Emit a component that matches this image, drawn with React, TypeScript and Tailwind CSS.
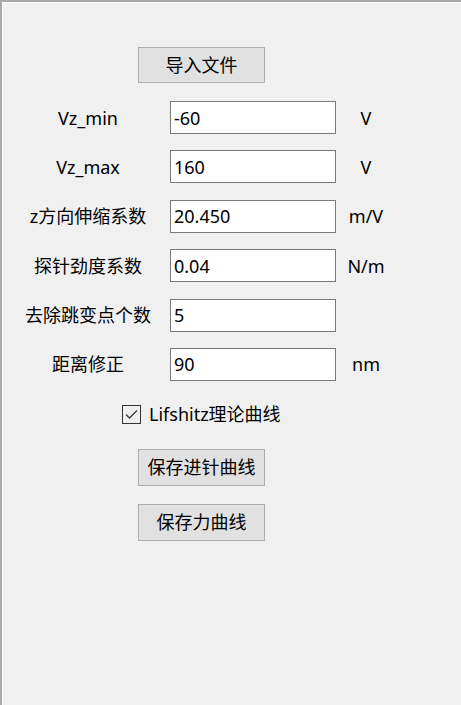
import React from "react";

const rows: { label: string; value: string; unit: string }[] = [
  { label: "Vz_min", value: "-60", unit: "V" },
  { label: "Vz_max", value: "160", unit: "V" },
  { label: "z方向伸缩系数", value: "20.450", unit: "m/V" },
  { label: "探针劲度系数", value: "0.04", unit: "N/m" },
  { label: "去除跳变点个数", value: "5", unit: "" },
  { label: "距离修正", value: "90", unit: "nm" },
];

const font = {
  fontFamily: '"Noto Sans", "Noto Sans CJK SC", sans-serif',
};

export default function App() {
  return (
    <div
      className="w-[461px] h-[705px] bg-[#f0f0f0] border-t-2 border-l-2 border-[#a9a9a9] overflow-hidden text-black text-[18px]"
      style={font}
    >
      <div className="w-full h-full border-t border-l border-white flex flex-col">
        <button className="ml-[135px] mt-[44px] w-[127px] h-[36px] border border-[#adadad] bg-[#e1e1e1] text-[18px] leading-none flex items-center justify-center">
          导入文件
        </button>
        <div className="mt-[18px] flex flex-col gap-[16.4px]">
          {rows.map((r) => (
            <div key={r.label} className="flex items-center pl-[17px] h-[33px]">
              <div className="w-[136px] text-center whitespace-nowrap leading-none">{r.label}</div>
              <div className="ml-[14px] w-[166px] h-[33px] bg-white border border-[#7a7a7a] flex items-center pl-[3px] leading-none">
                {r.value}
              </div>
              <div className="w-[60px] text-center leading-none">{r.unit}</div>
            </div>
          ))}
        </div>
        <div className="mt-[24px] ml-[119px] flex items-center h-[19px]">
          <div className="w-[19px] h-[19px] border border-[#333333] bg-[#f0f0f0] flex items-center justify-center">
            <svg width="15" height="15" viewBox="0 0 15 15">
              <polyline points="2,7.5 5.5,11 13,3.5" fill="none" stroke="#444444" strokeWidth="1.5" />
            </svg>
          </div>
          <span className="ml-[8px] leading-none whitespace-nowrap">Lifshitz理论曲线</span>
        </div>
        <button className="ml-[135px] mt-[25px] w-[127px] h-[37px] border border-[#adadad] bg-[#e1e1e1] text-[18px] leading-none flex items-center justify-center">
          保存进针曲线
        </button>
        <button className="ml-[135px] mt-[18px] w-[127px] h-[37px] border border-[#adadad] bg-[#e1e1e1] text-[18px] leading-none flex items-center justify-center">
          保存力曲线
        </button>
      </div>
    </div>
  );
}
